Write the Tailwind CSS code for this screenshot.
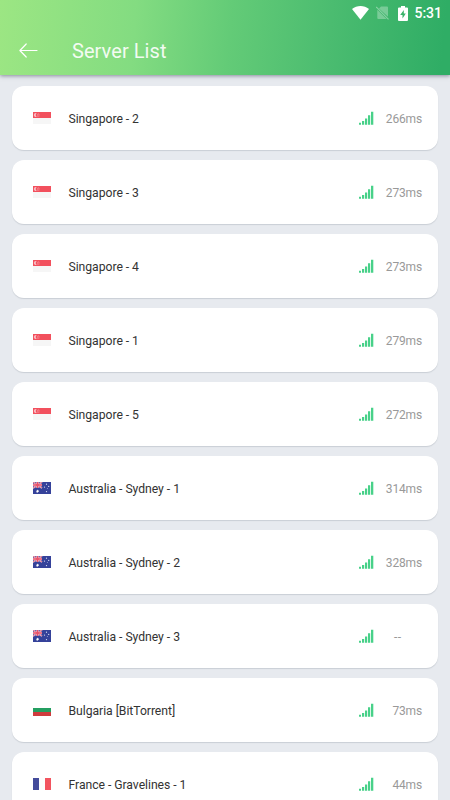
<!DOCTYPE html>
<html lang="en">
<head>
<meta charset="utf-8">
<meta name="viewport" content="width=device-width, initial-scale=1">
<title>Server List</title>
<script src="https://cdn.jsdelivr.net/npm/@tailwindcss/browser@4"></script>
</head>
<body class="bg-[#e7eaef] font-[Roboto,sans-serif]">
<svg class="hidden">
  <symbol id="sg" viewBox="0 0 18 12">
    <rect width="18" height="12" fill="#f6f6f6"/><rect width="18" height="6" fill="#f2505d"/>
    <path d="M3.7 1.2a2 2 0 1 0 0 3.6a2.2 2.2 0 0 1 0-3.6z" fill="#f9bcc2"/>
    <path d="M4.9 1.5h.7v.7h-.7zM4.1 2.5h.7v.7h-.7zM5.7 2.5h.7v.7h-.7zM4.4 3.7h.7v.7h-.7zM5.5 3.7h.7v.7h-.7z" fill="#f9bcc2"/>
  </symbol>
  <symbol id="au" viewBox="0 0 18 12">
    <rect width="18" height="12" fill="#35429a"/>
    <path d="M0 0L9 6M9 0L0 6" stroke="#eed5e0" stroke-width="1.6"/>
    <path d="M4.5 0v6M0 3h9" stroke="#f3dce4" stroke-width="2.2"/>
    <path d="M0 0L9 6M9 0L0 6" stroke="#e0607c" stroke-width=".9"/>
    <path d="M4.5 0v6M0 3h9" stroke="#ea5268" stroke-width="1.5"/>
    <path d="M4.5 7.5l.45 1 .95-.2-.5.85.7.75-1 .1-.2 1-.6-.8-.9.4.2-1-.9-.5 1-.3z" fill="#fff"/>
    <g fill="#dfe3f5"><circle cx="13.5" cy="2.2" r=".6"/><circle cx="11.5" cy="5.1" r=".6"/><circle cx="15.7" cy="4.4" r=".6"/><circle cx="14.3" cy="6.5" r=".4"/><circle cx="13.5" cy="9.6" r=".65"/></g>
  </symbol>
  <symbol id="bg" viewBox="0 0 18 12">
    <rect width="18" height="12" fill="#fff"/><rect y="4" width="18" height="4" fill="#249f61"/><rect y="8" width="18" height="4" fill="#cf3b3d"/>
  </symbol>
  <symbol id="fr" viewBox="0 0 18 12">
    <rect width="18" height="12" fill="#fdfdfd"/><rect width="6" height="12" fill="#444b9b"/><rect x="12" width="6" height="12" fill="#f2545f"/>
  </symbol>
  <symbol id="signal" viewBox="0 0 15 14">
    <path d="M0 11.8h2v1.9H0zM3 10h2.2v3.7H3zM6 7.5h2.2v6.2H6zM9 4.2h2.2v9.5H9zM12 .8h2.3v12.9H12z" fill="#48d189"/>
  </symbol>
</svg>
<div class="flex h-[800px] w-[450px] flex-col overflow-hidden">
  <header class="z-10 flex h-[75px] shrink-0 flex-col bg-linear-[95deg,#9ce683_0%,#83dc81_30%,#63cb77_51%,#4bbc70_73%,#2fad65_98%] text-white shadow-[0_1px_4px_rgba(70,75,100,0.6)]">
    <div class="flex h-[26px] items-center justify-end pr-[8px]">
      <svg class="mr-[7px] h-[14px] w-[17px]" viewBox="0 0 17 14"><path d="M0 3C4.8-.9 12.2-.9 17 3L8.5 13.8z" fill="#fff"/></svg>
      <svg class="mr-[9px] h-[14px] w-[13px]" viewBox="0 0 13 14"><path d="M5 .5h6q1 0 1 1v9.2L3 2.4zM1.3 3.7L10.6 13H2.3q-1 0-1-1z" fill="#fff" opacity=".3"/><path d="M.2 1L12.5 13.3" stroke="#fff" stroke-width="1.1" opacity=".38"/></svg>
      <svg class="mr-[6px] h-[15px] w-[10px]" viewBox="0 0 10 15"><path fill-rule="evenodd" d="M3 0h4v1.5h2q1 0 1 1V14q0 1-1 1H1q-1 0-1-1V2.5q0-1 1-1h2zM5.8 3.9L2.2 9h2.3v3.5L7.8 7.6H5.8z" fill="#fff"/></svg>
      <span class="text-[14px] leading-none font-medium">5:31</span>
    </div>
    <div class="flex h-[49px] items-center pl-[19px]">
      <svg class="h-[15px] w-[19px]" viewBox="0 0 19 15" fill="none" stroke="#fff" stroke-width="1.2" stroke-linecap="round" stroke-linejoin="round"><path d="M18 7.5H.9M7.2 1L.9 7.5L7.2 14"/></svg>
      <h1 class="ml-[34px] pt-px text-[20px] leading-none tracking-[0.06px] opacity-90">Server List</h1>
    </div>
  </header>
  <main id="servers" class="flex flex-col gap-[10px] px-3 pt-[11px]"></main>
</div>
<script>
const servers = [
  ['sg', 'Singapore - 2', '266ms'],
  ['sg', 'Singapore - 3', '273ms'],
  ['sg', 'Singapore - 4', '273ms'],
  ['sg', 'Singapore - 1', '279ms'],
  ['sg', 'Singapore - 5', '272ms'],
  ['au', 'Australia - Sydney - 1', '314ms'],
  ['au', 'Australia - Sydney - 2', '328ms'],
  ['au', 'Australia - Sydney - 3', '--'],
  ['bg', 'Bulgaria [BitTorrent]', '73ms'],
  ['fr', 'France - Gravelines - 1', '44ms']
];
document.getElementById('servers').innerHTML = servers.map(([flag, name, ping]) => `
  <div class="flex h-16 shrink-0 items-center rounded-xl bg-white pr-4 pl-[21px] shadow-[0_1px_1px_rgba(100,110,125,0.22)]">
    <svg class="h-[12px] w-[18px]"><use href="#${flag}" width="18" height="12"/></svg>
    <span class="ml-[17.5px] grow pt-[2px] text-[12.2px] leading-none tracking-[-0.04px] text-[#333]">${name}</span>
    <svg class="h-[14px] w-[15px]"><use href="#signal" width="15" height="14"/></svg>
    <span class="w-12 pt-[2px] text-[12px] leading-none text-[#999] ${ping === '--' ? 'pl-5 tracking-[0.5px]' : 'text-right tracking-[-0.16px]'}">${ping}</span>
  </div>`).join('');
</script>
</body>
</html>
